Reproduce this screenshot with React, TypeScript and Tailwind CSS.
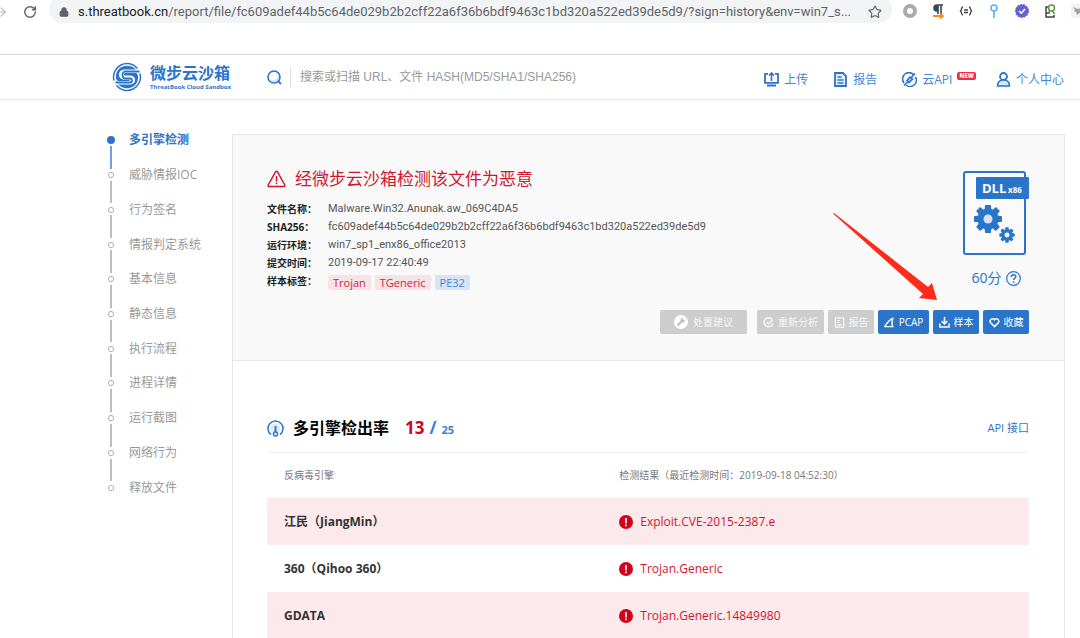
import clsx from "clsx";
import { Lock, RotateCw, ArrowRight, Star } from "lucide-react";
import type { ReactNode } from "react";

const SECTIONS = [
  "多引擎检测",
  "威胁情报IOC",
  "行为签名",
  "情报判定系统",
  "基本信息",
  "静态信息",
  "执行流程",
  "进程详情",
  "运行截图",
  "网络行为",
  "释放文件",
];

const META = [
  { label: "文件名称：", value: "Malware.Win32.Anunak.aw_069C4DA5" },
  { label: "SHA256：", value: "fc609adef44b5c64de029b2b2cff22a6f36b6bdf9463c1bd320a522ed39de5d9" },
  { label: "运行环境：", value: "win7_sp1_enx86_office2013" },
  { label: "提交时间：", value: "2019-09-17 22:40:49" },
];

const TAGS = [
  { name: "Trojan", danger: true },
  { name: "TGeneric", danger: true },
  { name: "PE32", danger: false },
];

const ENGINES = [
  { name: "江民（JiangMin）", result: "Exploit.CVE-2015-2387.e" },
  { name: "360（Qihoo 360）", result: "Trojan.Generic" },
  { name: "GDATA", result: "Trojan.Generic.14849980" },
];

const TEETH = [0, 45, 90, 135, 180, 225, 270, 315];

function BrowserBar() {
  return (
    <div className="flex h-[23px] items-center overflow-hidden text-[#5f6368]">
      <ArrowRight size={14} className="-ml-1.5 shrink-0 text-[#b5b7ba]" />
      <RotateCw size={14} strokeWidth={2.5} className="ml-[15px] shrink-0" />
      <div className="-mt-1 ml-3 flex h-[27px] min-w-0 flex-1 items-center rounded-full bg-[#f1f3f4] pt-1 pr-[10px] pl-[10px]">
        <Lock size={10} strokeWidth={3} fill="currentColor" className="shrink-0" />
        <span className="ml-[9px] min-w-0 flex-1 font-[Roboto,sans-serif] text-[13px] whitespace-nowrap">
          <span className="text-[#202124]">s.threatbook.cn</span>
          /report/file/fc609adef44b5c64de029b2b2cff22a6f36b6bdf9463c1bd320a522ed39de5d9/?sign=history&amp;env=win7_s...
        </span>
        <Star size={14} className="shrink-0" />
      </div>
      <div className="-mr-[5px] ml-[11px] flex shrink-0 items-center gap-[14px] pb-px">
        <svg width="14" height="14" viewBox="0 0 14 14">
          <circle cx="7" cy="7" r="5" fill="none" stroke="#aaa" strokeWidth="4" />
        </svg>
        <svg width="14" height="16" viewBox="0 0 14 16">
          <path d="M12 2H6a3 3 0 0 0 0 6h1M7 2v9M10 2v9" fill="none" stroke="#37474f" strokeWidth="1.6" />
          <path d="M4 3h3v5H5L3 6z" fill="#37474f" />
          <path d="M2 13h9M9 10.5l3 2.5-3 2.5" fill="none" stroke="#ff8a1c" strokeWidth="1.8" />
        </svg>
        <svg width="14" height="12" viewBox="0 0 14 12" fill="none" stroke="#444" strokeWidth="1.4">
          <path d="M4 2C2 2 3 5 1.5 6 3 7 2 10 4 10M10 2c2 0 1 3 2.500 4C11 7 12 10 10 10M5 5h4M5 7.500h4" />
        </svg>
        <svg width="14" height="14" viewBox="0 0 14 14" fill="none" stroke="#5ab0f7" strokeWidth="1.6">
          <circle cx="7" cy="4" r="3" />
          <path d="M7 7v7" />
        </svg>
        <svg width="14" height="14" viewBox="0 0 14 14">
          <circle cx="7" cy="7" r="6.300" fill="#6661d0" stroke="#6661d0" strokeWidth="1.400" strokeDasharray="2 1" />
          <path d="M4 7l2.300 2.200L10 5" fill="none" stroke="#fff" strokeWidth="1.500" />
        </svg>
        <svg width="14" height="14" viewBox="0 0 14 14" fill="none" strokeWidth="1.500">
          <path d="M5 3H3v10h8v-2M3 9h4" stroke="#444" />
          <circle cx="8.500" cy="4" r="3" stroke="#5f9640" />
          <path d="M7 6.500l-2 3M9.500 7l2 3" stroke="#5f9640" />
        </svg>
        <svg width="14" height="14" viewBox="0 0 14 14">
          <rect width="14" height="14" rx="2" fill="#f3f3f3" />
          <path d="M2 3l5 2 5-2-2 5-4 3-1-3-2-1 1-1z" fill="#a2a2a2" />
        </svg>
      </div>
    </div>
  );
}

function Logo() {
  return (
    <a href="#home" className="flex items-center gap-2 text-[#2a74c9]">
      <svg width="30" height="30" viewBox="0 0 30 30" fill="none" stroke="currentColor">
        <path d="M2 18.500A13.500 13.500 0 0 1 25.500 6.500M28 11.500A13.500 13.500 0 0 1 4.500 23.500" strokeWidth="1.500" />
        <path d="M27.500 9.500H12.500a4 4 0 0 0 0 7H18a1.500 1.500 0 0 1 0 4H3.500" strokeWidth="1.800" />
        <path
          d="M24 7.500C21 4.500 17.500 3.800 15 3.800 8 3.800 3.500 9 4 15.500c.2 2 1 3.500 2.500 3.500H17c1 0 1-1.300 0-1.300h-4.500C5 17.700 5 7.500 12.500 7.500z"
          fill="currentColor"
          stroke="none"
        />
        <path
          d="M6 22.500c3 3 6.500 3.700 9 3.700 7 0 11.500-5.200 11-11.700-.2-2-1-3.500-2.500-3.500H13c-1.500 0-1.500 2.500 0 2.500h5.500c6 0 6 9 0 9z"
          fill="currentColor"
          stroke="none"
        />
      </svg>
      <span className="flex flex-col">
        <span className="text-base leading-5 font-bold">微步云沙箱</span>
        <span className="font-['Open_Sans',sans-serif] text-[6px] leading-[8px] font-bold whitespace-nowrap">
          ThreatBook Cloud Sandbox
        </span>
      </span>
    </a>
  );
}

function HeaderLink({ label, badge, children }: { label: string; badge?: string; children: ReactNode }) {
  return (
    <a href="#nav" className="flex items-center gap-[5px] text-xs whitespace-nowrap text-[#4287d2]">
      <svg width="15" height="15" viewBox="0 0 15 15" fill="none" stroke="#2a74c9" strokeWidth="1.600">
        {children}
      </svg>
      <span>{label}</span>
      {badge && (
        <span className="-mt-2 -mr-[5px] rounded-xs bg-[#f5293f] px-[2px] font-['Open_Sans',sans-serif] text-[6px] leading-[8px] font-extrabold text-white">
          {badge}
        </span>
      )}
    </a>
  );
}

function Header() {
  return (
    <header className="mt-[31px] flex h-[46px] items-center border-t border-b border-t-[#d5d7da] border-b-[#e8e8e8] pr-4 pl-28 shadow-xs">
      <Logo />
      <form className="ml-9 flex min-w-0 flex-1 items-center">
        <button type="button" aria-label="搜索" className="shrink-0">
          <svg width="15" height="15" viewBox="0 0 15 15" fill="none">
            <circle cx="7" cy="7" r="6" fill="#fff" stroke="#2a74c9" strokeWidth="1.600" />
            <path d="M11 5a5 5 0 0 1-7 5.500 4.500 4.500 0 0 0 7-5.500z" fill="#cfe0f4" stroke="#cfe0f4" />
            <path d="M11 11l3 3" stroke="#2a74c9" strokeWidth="1.800" />
          </svg>
        </button>
        <input
          type="text"
          aria-label="搜索或扫描"
          placeholder="搜索或扫描 URL、文件 HASH(MD5/SHA1/SHA256)"
          className="ml-2 h-5 min-w-0 flex-1 border-l border-[#dcdcdc] pl-[9px] font-['Liberation_Sans','Noto_Sans_CJK_SC',sans-serif] text-xs outline-none placeholder:text-[#999]"
        />
      </form>
      <nav className="flex items-center gap-[25px] pt-[5px]">
        <HeaderLink label="上传">
          <path d="M4 1.800H1v9h13v-9h-3M3 13.500h9" strokeWidth="1.800" />
          <path d="M7.500 9V1M5 3.500L7.500 1 10 3.500" />
        </HeaderLink>
        <HeaderLink label="报告">
          <path d="M2 1h8l3 3v10H2z" strokeWidth="1.800" fill="#e4eefa" />
          <path d="M4.500 5h4M4.500 8h6M4.500 11h6" />
        </HeaderLink>
        <HeaderLink label="云API" badge="NEW">
          <path d="M12 3A6.300 6.300 0 0 0 2 11M13.500 5A6.300 6.300 0 0 1 4 13" />
          <path d="M5 8.500l3-3.500 2.500 2-3.500 3.500zM2 13.500l4-4M9 6l4-4.500" fill="#a9c8ec" />
        </HeaderLink>
        <HeaderLink label="个人中心">
          <circle cx="7.500" cy="4.500" r="3.500" strokeWidth="1.800" />
          <path d="M1.500 14c0-4 2.500-6 6-6s6 2 6 6z" fill="#dbe7f5" />
        </HeaderLink>
      </nav>
    </header>
  );
}

function SideNav() {
  return (
    <nav className="w-[125px] shrink-0">
      <ul className="-mt-[11px] grid h-[382px] auto-rows-fr">
        {SECTIONS.map((name, i) => (
          <li key={name} className="relative">
            {i < SECTIONS.length - 1 && (
              <span
                className={clsx(
                  "absolute top-[23px] -bottom-[11px] left-[3px] w-[2px]",
                  i === 0 ? "bg-[#6fa3de]" : "bg-[#bdbdbd]"
                )}
              />
            )}
            <a href="#section" className="flex h-full items-center gap-[14px]">
              <span
                className={clsx(
                  "size-2 shrink-0 rounded-full",
                  i === 0 ? "bg-[#2a74c9]" : "scale-75 border border-[#999] bg-white"
                )}
              />
              <span className={clsx("text-xs", i === 0 ? "font-bold text-[#2a74c9]" : "text-[#999]")}>
                {name}
              </span>
            </a>
          </li>
        ))}
      </ul>
    </nav>
  );
}

function Gear({ x, y, size, hole }: { x: number; y: number; size: number; hole: string }) {
  return (
    <g transform={`translate(${x} ${y}) scale(${size})`} fill="#2a74c9">
      <circle r="10.500" />
      {TEETH.map((deg) => (
        <path key={deg} d="M-3.500-9L-2.800-14h5.600L3.500-9z" transform={`rotate(${deg})`} />
      ))}
      <circle r="4.500" fill={hole} />
    </g>
  );
}

function FileType() {
  return (
    <svg width="66" height="84" viewBox="0 0 66 84">
      <rect x="1" y="1" width="61" height="82" rx="2" fill="#fafafa" stroke="#2a74c9" strokeWidth="2" />
      <rect x="13" y="6" width="53" height="22" rx="1" fill="#2a74c9" />
      <text x="19" y="22" fill="#fff" fontFamily="Open Sans" fontWeight="700" fontSize="13">
        DLL
      </text>
      <text x="45" y="22" fill="#fff" fontFamily="Open Sans" fontWeight="700" fontSize="8">
        x86
      </text>
      <Gear x={25} y={48} size={1} hole="#d3e2f4" />
      <Gear x={44} y={64} size={0.55} hole="#fafafa" />
    </svg>
  );
}

function ActionButton({
  label,
  primary,
  className,
  children,
}: {
  label: string;
  primary?: boolean;
  className: string;
  children: ReactNode;
}) {
  return (
    <button
      type="button"
      className={clsx(
        "flex h-6 items-center justify-center gap-1 rounded-xs text-[10px] whitespace-nowrap",
        primary ? "bg-[#2a74c9] text-white" : "bg-[#cdcdcd] text-[#f7f7f7]",
        className
      )}
    >
      {children}
      {label}
    </button>
  );
}

function Actions() {
  const icon = { width: 11, height: 11, viewBox: "0 0 12 12", fill: "none", stroke: "currentColor", strokeWidth: 1.6 };
  return (
    <div className="flex justify-end gap-1">
      <ActionButton label="处置建议" className="mr-[6px] w-[87px]">
        <svg width="14" height="14" viewBox="0 0 14 14" className="mr-px">
          <circle cx="7" cy="7" r="7" fill="#fff" />
          <path d="M3.500 10.500L7.500 6.500" stroke="#bbb" strokeWidth="2" />
          <path d="M6.500 6a2.500 2.500 0 0 1 3.200-2.800L8.500 4.500l1 1 1.400-1.200A2.500 2.500 0 0 1 8 7.500z" fill="#bbb" />
        </svg>
      </ActionButton>
      <ActionButton label="重新分析" className="w-[67px]">
        <svg {...icon}>
          <path d="M10 2.500A5 5 0 1 0 11 7M4 5.500l2 2 5-4.500" />
        </svg>
      </ActionButton>
      <ActionButton label="报告" className="w-[46px]">
        <svg {...icon} strokeWidth={1.3}>
          <path d="M1.500 1h9v10h-9zM3.500 4h3M3.500 6h2M3.500 8.500h5" />
        </svg>
      </ActionButton>
      <ActionButton label="PCAP" primary className="w-[51px]">
        <svg {...icon}>
          <path d="M1 10.500C3 7 5 3 9.500 1.500c-1 3-1 6 0 9z" />
        </svg>
      </ActionButton>
      <ActionButton label="样本" primary className="w-[46px]">
        <svg {...icon}>
          <path d="M6 0v7M3 4.500l3 3 3-3M1 7v4h10V7" />
        </svg>
      </ActionButton>
      <ActionButton label="收藏" primary className="w-[46px]">
        <svg {...icon}>
          <path d="M6 10.500L1.800 6.200a2.600 2.600 0 0 1 4.200-3.200 2.600 2.600 0 0 1 4.200 3.200z" />
        </svg>
      </ActionButton>
    </div>
  );
}

function Summary() {
  return (
    <section className="relative border-b border-[#e6e6e6] bg-[#f9f9f9] pt-8 pr-[35px] pb-[26px] pl-[34px]">
      <div className="flex justify-between">
        <div>
          <h1 className="flex h-6 items-center gap-[9px] text-[17px] text-[#d0172f]">
            <svg width="19" height="18" viewBox="0 0 19 18" fill="none" stroke="currentColor" strokeWidth="1.500">
              <path d="M9.500 1.200c.5 0 .8.300 1 .6l7.300 13.200c.4.800 0 1.500-.9 1.500H2.100c-.9 0-1.300-.7-.9-1.500L8.500 1.800c.2-.300.500-.6 1-.6z" />
              <path d="M9.500 6v5.500M9.500 12.500v1.700" />
            </svg>
            经微步云沙箱检测该文件为恶意
          </h1>
          <dl className="mt-[9px] text-[10px] leading-[18px]">
            {META.map(({ label, value }) => (
              <div key={label} className="flex">
                <dt className="w-[61px] shrink-0 font-bold text-[#222]">{label}</dt>
                <dd className="font-[Roboto,sans-serif] text-[11px] text-[#555]">{value}</dd>
              </div>
            ))}
            <div className="flex">
              <dt className="w-[61px] shrink-0 font-bold text-[#222]">样本标签：</dt>
              <dd className="flex items-end gap-1 font-['Open_Sans',sans-serif] text-[11px]">
                {TAGS.map(({ name, danger }) => (
                  <span
                    key={name}
                    className={clsx(
                      "rounded-xs px-[5px] leading-[15px]",
                      danger ? "bg-[#f6e3e6] text-[#d0243c]" : "bg-[#d7e4f3] text-[#4a88d0]"
                    )}
                  >
                    {name}
                  </span>
                ))}
              </dd>
            </div>
          </dl>
        </div>
        <div className="flex w-[66px] flex-col items-center pt-1">
          <FileType />
          <div className="mt-[13px] flex items-center gap-1 text-sm whitespace-nowrap text-[#2a74c9]">
            60分
            <svg width="15" height="15" viewBox="0 0 15 15" fill="none" stroke="currentColor" strokeWidth="1.200">
              <circle cx="7.500" cy="7.500" r="6.800" />
              <path d="M5.300 6c0-3 4.500-3 4.500-.3 0 1.500-2.200 1.500-2.200 3.300M7.600 10.300v1.500" strokeWidth="1.500" />
            </svg>
          </div>
        </div>
      </div>
      <div className="mt-5">
        <Actions />
      </div>
      <svg className="absolute top-[78px] right-[127px]" width="104" height="88" viewBox="0 0 104 88">
        <path d="M0 0.500L1 0L95 74l4-4 5 17-18-2 4-4z" fill="#ff2a1a" />
      </svg>
    </section>
  );
}

function AlertDot() {
  return (
    <svg width="14" height="14" viewBox="0 0 14 14">
      <circle cx="7" cy="7" r="7" fill="#d0021b" />
      <path d="M7 3v5.500M7 9.500v1.700" stroke="#fff" strokeWidth="1.600" />
    </svg>
  );
}

function Engines() {
  return (
    <section className="pt-[50px] pr-[35px] pl-[34px]">
      <div className="flex h-[42px] items-start justify-between border-b border-[#f0f0f0]">
        <div className="flex h-[34px] items-center">
          <svg width="17" height="17" viewBox="0 0 17 17" fill="none" stroke="#2f7bd0" strokeWidth="1.600">
            <path d="M4 14.500a7.500 7.500 0 1 1 9 0" />
            <path d="M5 12a5 5 0 1 1 7 0z" fill="#dfeaf7" stroke="none" />
            <path d="M8.500 6v6" strokeWidth="2" />
            <circle cx="8.500" cy="14" r="2" />
          </svg>
          <h2 className="ml-[9px] text-base font-bold text-black">多引擎检出率</h2>
          <p className="ml-4 flex items-baseline gap-[5px] font-['Open_Sans',sans-serif] font-bold text-[#3a80d2]">
            <span className="text-[17px] text-[#d0021b]">13</span>
            <span className="text-[17px]">/</span>
            <span className="text-[11px]">25</span>
          </p>
        </div>
        <a href="#api" className="text-[11px] leading-[34px] text-[#2a74c9]">
          API 接口
        </a>
      </div>
      <table className="w-full table-fixed text-left">
        <thead>
          <tr className="h-[45px] text-[10px] text-[#777]">
            <th className="w-[44%] pl-[17px] font-normal">反病毒引擎</th>
            <th className="pl-[17px] font-normal">检测结果（最近检测时间：2019-09-18 04:52:30）</th>
          </tr>
        </thead>
        <tbody>
          {ENGINES.map(({ name, result }, i) => (
            <tr key={name} className={clsx("h-[47px]", i % 2 === 0 && "bg-[#fbe9eb]")}>
              <td className="pl-[17px] text-xs font-bold text-[#333]">{name}</td>
              <td className="pl-[17px]">
                <span className="flex items-center gap-[7px] text-xs text-[#d0172f]">
                  <AlertDot />
                  {result}
                </span>
              </td>
            </tr>
          ))}
        </tbody>
      </table>
    </section>
  );
}

export default function App() {
  return (
    <div className="min-h-screen overflow-hidden bg-white font-['Open_Sans','Noto_Sans_CJK_SC',sans-serif]">
      <BrowserBar />
      <Header />
      <div className="flex items-start pt-[34px] pr-[15px] pl-[107px]">
        <SideNav />
        <main className="min-w-0 flex-1 border border-b-0 border-[#e6e6e6]">
          <Summary />
          <Engines />
        </main>
      </div>
    </div>
  );
}
